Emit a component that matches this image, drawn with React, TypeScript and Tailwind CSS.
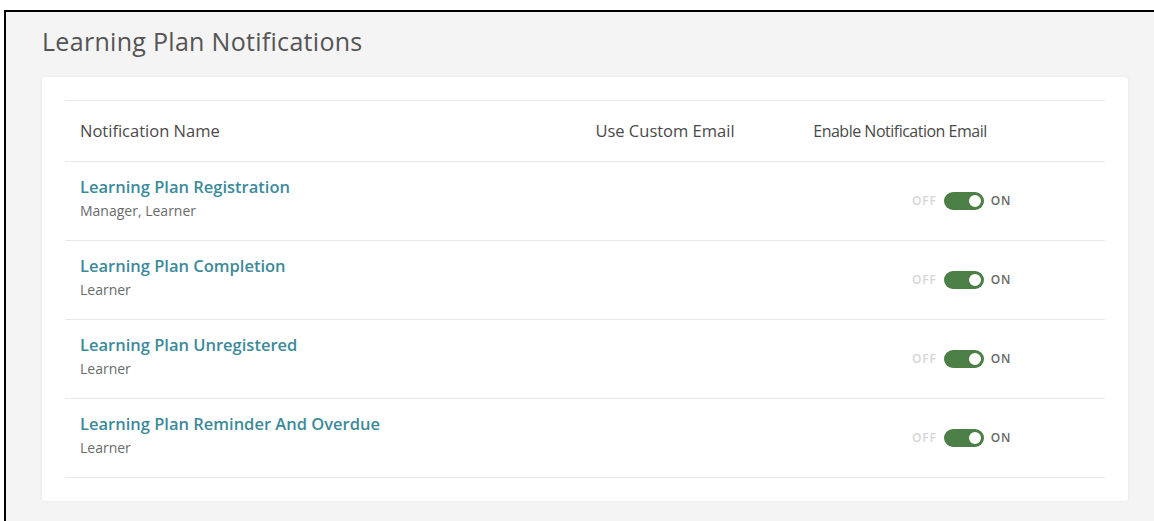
import React from "react";

type Row = { name: string; audience: string };

const rows: Row[] = [
  { name: "Learning Plan Registration", audience: "Manager, Learner" },
  { name: "Learning Plan Completion", audience: "Learner" },
  { name: "Learning Plan Unregistered", audience: "Learner" },
  { name: "Learning Plan Reminder And Overdue", audience: "Learner" },
];

function Toggle() {
  return (
    <div className="flex items-center gap-[7px]">
      <span className="text-[12px] font-semibold tracking-[0.8px] text-[#d6d6d6]">OFF</span>
      <span className="relative flex h-[18px] w-[40px] items-center rounded-full bg-[#4b7f46]">
        <span className="absolute right-[1px] top-[1px] h-[16px] w-[16px] rounded-full border-[2px] border-[#4b7f46] bg-white" />
      </span>
      <span className="text-[12px] font-semibold tracking-[0.8px] text-[#666]">ON</span>
    </div>
  );
}

export default function App() {
  return (
    <div
      className="h-[521px] w-[1154px] overflow-hidden bg-white pl-[4px] pt-[10px]"
      style={{ fontFamily: '"Open Sans", "Liberation Sans", sans-serif' }}
    >
      <div className="h-full border-l-2 border-t-2 border-black bg-[#f4f4f4] pl-[36px] pt-[13px]">
        <h1 className="text-[25px] leading-[32px] tracking-[0.3px] text-[#555]">Learning Plan Notifications</h1>
        <div className="mt-[20px] w-[1086px] rounded-[3px] bg-white px-[23px] pb-[23px] pt-[23px] shadow-[0_0_3px_rgba(0,0,0,0.07)]">
          <div className="border-t border-[#e8e8e8]">
            <div className="grid h-[61px] grid-cols-[495px_210px_260px_1fr] items-center border-b border-[#e8e8e8] text-[16.5px] font-medium text-[#4a4a4a]">
              <div className="pl-[15px]">Notification Name</div>
              <div className="text-center">Use Custom Email</div>
              <div className="text-center text-[16px] tracking-[-0.5px]">Enable Notification Email</div>
              <div />
            </div>
            {rows.map((r) => (
              <div
                key={r.name}
                className="grid h-[79px] grid-cols-[495px_210px_260px_1fr] items-center border-b border-[#e8e8e8]"
              >
                <div className="-mt-[5px] pl-[15px]">
                  <div className="text-[16.5px] font-semibold leading-[22px] text-[#3c8a99]">{r.name}</div>
                  <div className="mt-[3px] text-[14px] leading-[20px] text-[#6b6b6b]">{r.audience}</div>
                </div>
                <div />
                <div className="pl-[142px]">
                  <Toggle />
                </div>
                <div />
              </div>
            ))}
          </div>
        </div>
      </div>
    </div>
  );
}
